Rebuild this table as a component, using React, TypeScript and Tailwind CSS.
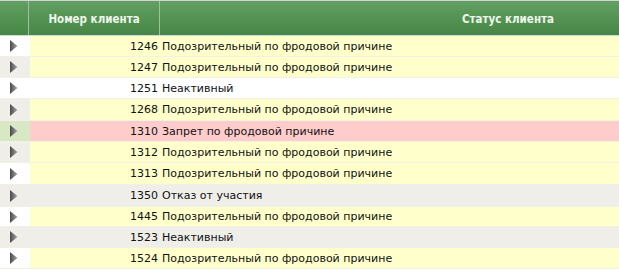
import React from "react";

type Row = { id: number; status: string; kind: "sus" | "plain" | "fraud"; h: string };

const rows: Row[] = [
  { id: 1246, status: "Подозрительный по фродовой причине", kind: "sus", h: "h-[21px]" },
  { id: 1247, status: "Подозрительный по фродовой причине", kind: "sus", h: "h-[21px]" },
  { id: 1251, status: "Неактивный", kind: "plain", h: "h-[21px]" },
  { id: 1268, status: "Подозрительный по фродовой причине", kind: "sus", h: "h-[22px]" },
  { id: 1310, status: "Запрет по фродовой причине", kind: "fraud", h: "h-[21px]" },
  { id: 1312, status: "Подозрительный по фродовой причине", kind: "sus", h: "h-[21px]" },
  { id: 1313, status: "Подозрительный по фродовой причине", kind: "sus", h: "h-[22px]" },
  { id: 1350, status: "Отказ от участия", kind: "plain", h: "h-[22px]" },
  { id: 1445, status: "Подозрительный по фродовой причине", kind: "sus", h: "h-[20px]" },
  { id: 1523, status: "Неактивный", kind: "plain", h: "h-[21px]" },
  { id: 1524, status: "Подозрительный по фродовой причине", kind: "sus", h: "h-[21px]" },
];

function Arrow() {
  return (
    <svg width="8" height="12" viewBox="0 0 8 12">
      <defs>
        <linearGradient id="ag" x1="0" y1="0" x2="1" y2="0">
          <stop offset="0" stopColor="#4a4a4a" />
          <stop offset="1" stopColor="#a8a8a8" />
        </linearGradient>
      </defs>
      <path d="M0 0 L7.5 6 L0 12 Z" fill="url(#ag)" />
    </svg>
  );
}

export default function App() {
  return (
    <div
      className="w-[619px] h-[273px] overflow-hidden bg-white text-[11px] text-[#111]"
      style={{ fontFamily: "Tahoma, 'DejaVu Sans', Verdana, sans-serif" }}
    >
      <div className="w-[860px]">
        <div
          className="flex h-[36px] border-t border-b border-t-[#d4d4d4] border-b-[#cfdccf] bg-gradient-to-b from-[#63a063] to-[#468646] font-bold text-[11.5px] text-[#eef6ea]"
          style={{ fontFamily: "'DejaVu Sans Condensed', 'DejaVu Sans', sans-serif" }}
        >
          <div className="w-[29px] border-r border-[#9cc49c]" />
          <div className="w-[131px] border-r border-[#9cc49c] flex items-center justify-center pt-[4px]">
            Номер клиента
          </div>
          <div className="flex-1 flex items-center justify-center pt-[4px] pr-[4px]">
            Статус клиента
          </div>
        </div>
        {rows.map((r, i) => {
          const odd = i % 2 === 1;
          const leftBg =
            r.kind === "fraud" ? "bg-[#d8e8c4]" : odd ? "bg-[#efeee9]" : "bg-white";
          const rightBg =
            r.kind === "fraud"
              ? "bg-[#ffcccc]"
              : r.kind === "sus"
              ? "bg-[#ffffcc]"
              : odd
              ? "bg-[#efeee9]"
              : "bg-white";
          return (
            <div key={r.id} className={`flex ${r.h} border-b border-[#f1f1e6]`}>
              <div className={`w-[30px] flex items-center pl-[10px] ${leftBg}`}>
                <Arrow />
              </div>
              <div className={`flex-1 flex items-center pt-[2px] ${rightBg}`}>
                <div className="w-[128px] text-right">{r.id}</div>
                <div className="pl-[4px]">{r.status}</div>
              </div>
            </div>
          );
        })}
      </div>
    </div>
  );
}
